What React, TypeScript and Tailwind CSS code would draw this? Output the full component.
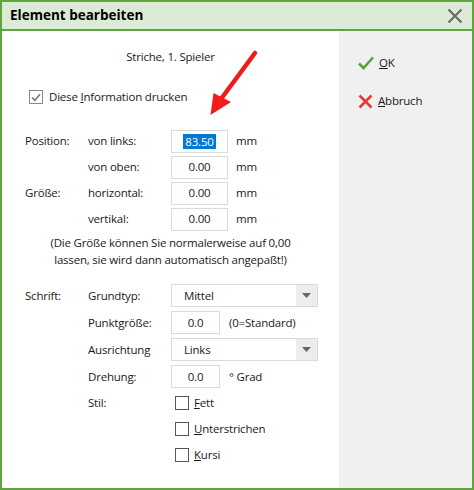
/* Dialog "Element bearbeiten" — Druckelement-Eigenschaften (Position, Größe, Schrift). */
import React from "react";

const FONT = "font-['Open_Sans','Noto_Sans',sans-serif]";

export default function App() {
  return (
    <div className={`${FONT} flex h-[490px] w-[474px] flex-col border-2 border-[#5ea63b] bg-white text-[11.5px] tracking-[-0.2px] text-[#1a1a1a]`}>
      {/* Title bar */}
      <div className="flex h-[29px] shrink-0 items-center justify-between border-b-2 border-[#5ea63b] bg-[#dcebd5] pl-[8px] pr-[9px]">
        <span className="text-[13.5px] font-bold tracking-normal text-black">Element bearbeiten</span>
        <svg width="16" height="16" viewBox="0 0 16 16">
          <path d="M1.5 1.5 L14.5 14.5 M14.5 1.5 L1.5 14.5" stroke="#666" strokeWidth="2" />
        </svg>
      </div>

      <div className="flex flex-1">
        {/* Left: form */}
        <div className="relative w-[337px] shrink-0 bg-white">
          <div className="flex h-[51px] items-center justify-center">Striche, 1. Spieler</div>
          <div className="flex h-[30px] items-center pl-[27px]">
            <CheckBox checked />
            <span className="ml-[6px]">
              Diese <u>I</u>nformation drucken
            </span>
          </div>

          <div className="mt-[16px] pl-[23px]">
            <NumRow label="Position:" sub="von links:" value="83.50" selected />
            <NumRow sub="von oben:" value="0.00" />
            <NumRow label="Größe:" sub="horizontal:" value="0.00" />
            <NumRow sub="vertikal:" value="0.00" />
          </div>

          <p className="mt-[2px] text-center leading-[17px]">
            (Die Größe können Sie normalerweise auf 0,00
            <br />
            lassen, sie wird dann automatisch angepaßt!)
          </p>

          <div className="mt-[14px] pl-[23px]">
            <Row label="Schrift:" sub="Grundtyp:" h="h-[27px]">
              <Select value="Mittel" />
            </Row>
            <Row sub="Punktgröße:" h="h-[27px]">
              <Input value="0.0" w="w-[49px]" />
              <span className="ml-[9px]">(0=Standard)</span>
            </Row>
            <Row sub="Ausrichtung" h="h-[27px]">
              <Select value="Links" />
            </Row>
            <Row sub="Drehung:" h="h-[27px]">
              <Input value="0.0" w="w-[49px]" />
              <span className="ml-[9px]">° Grad</span>
            </Row>
            <Row sub="Stil:" h="h-[26px]">
              <Style first="F" rest="ett" />
            </Row>
            <Row h="h-[26px]">
              <Style first="U" rest="nterstrichen" />
            </Row>
            <Row h="h-[26px]">
              <Style first="K" rest="ursi" />
            </Row>
          </div>

          {/* Red pointer arrow */}
          <svg className="pointer-events-none absolute left-0 top-0" width="337" height="100" viewBox="0 0 337 100">
            <line x1="253" y1="22" x2="219" y2="68" stroke="#f21b1b" strokeWidth="4.5" strokeLinecap="round" />
            <polygon points="208.5,84 211.5,62 229,71" fill="#f21b1b" />
          </svg>
        </div>

        {/* Right: buttons */}
        <div className="flex-1 bg-[#f0f0f0] pl-[19px] pt-[22px]">
          <div className="flex h-[20px] items-center">
            <svg width="16" height="14" viewBox="0 0 16 14">
              <path d="M1 7.5 L5.5 12 L15 1.5" fill="none" stroke="#5aa33a" strokeWidth="2.6" />
            </svg>
            <span className="ml-[5px]">
              <u>O</u>K
            </span>
          </div>
          <div className="mt-[18px] flex h-[20px] items-center">
            <svg width="15" height="15" viewBox="0 0 15 15">
              <path d="M1.5 1.5 L13.5 13.5 M13.5 1.5 L1.5 13.5" stroke="#e43a3a" strokeWidth="2.6" />
            </svg>
            <span className="ml-[5px]">
              <u>A</u>bbruch
            </span>
          </div>
        </div>
      </div>
    </div>
  );
}

function Row({ label, sub, h, children }: { label?: string; sub?: string; h: string; children: React.ReactNode }) {
  return (
    <div className={`flex items-center ${h}`}>
      <span className="w-[63px] shrink-0">{label}</span>
      <span className="w-[83px] shrink-0">{sub}</span>
      {children}
    </div>
  );
}

function NumRow({ label, sub, value, selected }: { label?: string; sub: string; value: string; selected?: boolean }) {
  return (
    <Row label={label} sub={sub} h="h-[26px]">
      <Input value={value} w="w-[57px]" selected={selected} />
      <span className="ml-[8px]">mm</span>
    </Row>
  );
}

function Input({ value, w, selected }: { value: string; w: string; selected?: boolean }) {
  return (
    <div className={`flex h-[23px] ${w} shrink-0 items-center justify-center border border-[#dadada] bg-white`}>
      <span className={selected ? "bg-[#0078d7] px-[2px] leading-[15px] text-white" : ""}>{value}</span>
    </div>
  );
}

function Select({ value }: { value: string }) {
  return (
    <div className="flex h-[23px] w-[147px] shrink-0 border border-[#dadada] bg-white">
      <span className="flex flex-1 items-center pl-[12px]">{value}</span>
      <span className="flex w-[21px] items-center justify-center bg-[#ededed]">
        <svg width="9" height="5" viewBox="0 0 9 5">
          <path d="M0 0 L9 0 L4.5 5 Z" fill="#666" />
        </svg>
      </span>
    </div>
  );
}

function CheckBox({ checked }: { checked?: boolean }) {
  return (
    <span className={`flex h-[14px] w-[14px] shrink-0 items-center justify-center border ${checked ? "border-[#8a8a8a]" : "border-[#555]"} bg-white`}>
      {checked && (
        <svg width="10" height="9" viewBox="0 0 10 9">
          <path d="M1 4.5 L3.8 7.3 L9 1.2" fill="none" stroke="#777" strokeWidth="1.6" />
        </svg>
      )}
    </span>
  );
}

function Style({ first, rest }: { first: string; rest: string }) {
  return (
    <span className="ml-[4px] flex items-center">
      <CheckBox />
      <span className="ml-[5px]">
        <u>{first}</u>
        {rest}
      </span>
    </span>
  );
}
